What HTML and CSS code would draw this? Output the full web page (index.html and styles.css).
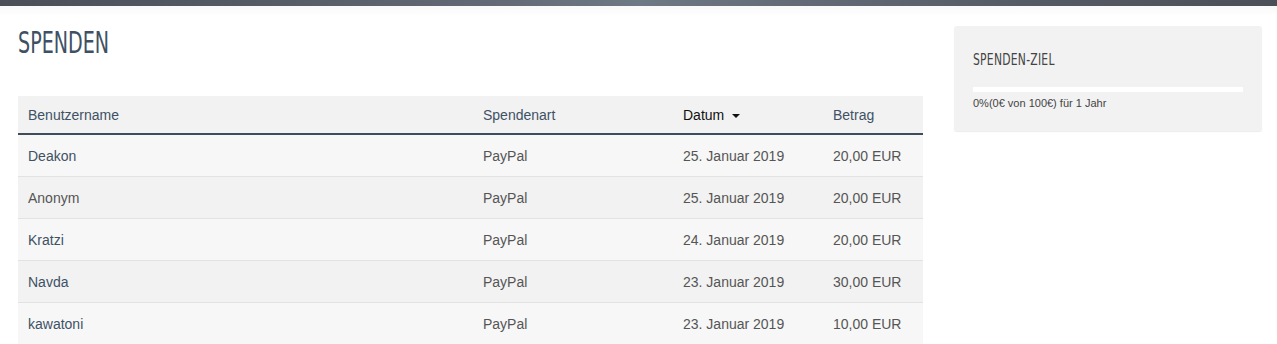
FILE: index.html
```html
<!DOCTYPE html>
<html lang="de">
<head>
<meta charset="utf-8">
<title>Spenden</title>
<link rel="stylesheet" href="styles.css">
</head>
<body>
<div class="topbar"></div>
<div class="topfade"></div>
<div class="page">
  <main class="main">
    <div class="title-wrap"><h1 class="title">SPENDEN</h1></div>
    <table class="donations">
      <thead>
        <tr>
          <th class="c1"><a>Benutzername</a></th>
          <th class="c2"><a>Spendenart</a></th>
          <th class="c3 active"><a>Datum <span class="caret"></span></a></th>
          <th class="c4"><a>Betrag</a></th>
        </tr>
      </thead>
      <tbody>
        <tr><td><a>Deakon</a></td><td>PayPal</td><td>25. Januar 2019</td><td>20,00 EUR</td></tr>
        <tr><td>Anonym</td><td>PayPal</td><td>25. Januar 2019</td><td>20,00 EUR</td></tr>
        <tr><td><a>Kratzi</a></td><td>PayPal</td><td>24. Januar 2019</td><td>20,00 EUR</td></tr>
        <tr><td><a>Navda</a></td><td>PayPal</td><td>23. Januar 2019</td><td>30,00 EUR</td></tr>
        <tr><td><a>kawatoni</a></td><td>PayPal</td><td>23. Januar 2019</td><td>10,00 EUR</td></tr>
      </tbody>
    </table>
  </main>
  <aside class="sidebar">
    <div class="box">
      <h2 class="box-title">SPENDEN-ZIEL</h2>
      <div class="progress"><div class="progress-fill" style="width:0%"></div></div>
      <div class="goal-text">0%(0€ von 100€) für 1 Jahr</div>
    </div>
  </aside>
</div>
</body>
</html>
```
FILE: styles.css
```css
html, body {
  margin: 0;
  padding: 0;
  background: #fff;
}
body {
  font-family: "Liberation Sans", Arial, sans-serif;
  font-size: 14px;
  color: #555;
  overflow: hidden;
}
.topbar {
  height: 6px;
  background: linear-gradient(90deg, #4a4f58 0%, #555b65 20%, #646b76 40%, #6d7984 50%, #646b76 62%, #555b65 80%, #4b4f57 100%);
}
.topfade {
  height: 10px;
  margin-bottom: -10px;
  background: linear-gradient(#f9f9fa, #fff);
}
.page {
  display: flex;
  padding: 0 15px 0 18px;
  gap: 31px;
}
.main {
  width: 905px;
  flex: none;
}
.title-wrap {
  height: 90px;
  padding-top: 19px;
  box-sizing: border-box;
}
.title {
  margin: 0;
  font-family: "DejaVu Sans Condensed", "DejaVu Sans", sans-serif;
  font-weight: normal;
  font-size: 31px;
  line-height: 34px;
  color: #3e5063;
  transform: scale(0.685, 1);
  transform-origin: left top;
  white-space: nowrap;
}
.donations {
  width: 905px;
  border-collapse: collapse;
  table-layout: fixed;
}
.donations th {
  background: #f2f2f2;
  font-weight: normal;
  text-align: left;
  height: 37px;
  padding: 0 10px;
  border-bottom: 2px solid #3e4d5c;
  color: #3e5165;
}
.donations th.c1 { width: 435px; }
.donations th.c2 { width: 180px; }
.donations th.c3 { width: 130px; }
.donations th.c4 { width: 80px; }
.donations th.active a { color: #111; }
.caret {
  display: inline-block;
  width: 0;
  height: 0;
  border-left: 4px solid transparent;
  border-right: 4px solid transparent;
  border-top: 4px solid #111;
  vertical-align: middle;
  margin-left: 4px;
}
.donations td {
  height: 41px;
  padding: 0 10px;
  border-bottom: 1px solid #e2e2e2;
  color: #555;
}
.donations tbody tr:nth-child(odd) td { background: #f7f7f7; }
.donations tbody tr:nth-child(even) td { background: #f2f2f2; }
.donations a { color: #3e5165; text-decoration: none; }
.sidebar {
  width: 308px;
  flex: none;
  padding-top: 20px;
}
.box {
  background: #f2f2f2;
  border-radius: 3px;
  box-shadow: 0 1px 1px rgba(0,0,0,0.08);
  padding: 22px 19px 22px 19px;
  height: 105px;
  box-sizing: border-box;
}
.box-title {
  margin: 0;
  font-family: "DejaVu Sans Condensed", "DejaVu Sans", sans-serif;
  font-weight: normal;
  font-size: 15px;
  line-height: 20px;
  color: #444;
  letter-spacing: 0.3px;
  transform: scale(0.8, 1.1);
  transform-origin: left top;
  white-space: nowrap;
}
.progress {
  margin-top: 19px;
  height: 5px;
  background: #fff;
}
.progress-fill {
  height: 100%;
  background: #3e5165;
}
.goal-text {
  margin-top: 4px;
  font-size: 11px;
  line-height: 14px;
  color: #444;
}
```
